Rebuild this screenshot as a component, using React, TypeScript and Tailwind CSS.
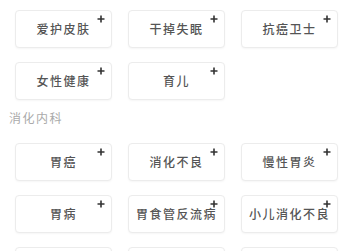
const sections: { title?: string; items: string[] }[] = [
  { items: ["爱护皮肤", "干掉失眠", "抗癌卫士", "女性健康", "育儿"] },
  {
    title: "消化内科",
    items: ["胃癌", "消化不良", "慢性胃炎", "胃病", "胃食管反流病", "小儿消化不良", "肠胃炎", "便秘", "腹泻"],
  },
];

function Tag({ label }: { label: string }) {
  return (
    <div className="relative flex h-[38px] items-center justify-center rounded-[4px] border border-[#ececec] bg-white shadow-[0_1px_2px_rgba(0,0,0,0.04)]">
      <span className="text-[12px] font-medium tracking-[1.5px] text-[#555]">{label}</span>
      <svg className="absolute right-[6px] top-[4px]" width="8" height="8" viewBox="0 0 8 8">
        <path d="M4 0.5v7M0.5 4h7" stroke="#333" strokeWidth="1.6" />
      </svg>
    </div>
  );
}

export default function App() {
  return (
    <div
      className="min-h-screen w-full overflow-hidden bg-white pt-[10px]"
      style={{ fontFamily: '"Noto Sans CJK SC", "Noto Sans", sans-serif' }}
    >
      {sections.map((s, i) => (
        <div key={i}>
          {s.title && (
            <div className="mt-[9px] mb-[16px] pl-[9px] text-[12px] leading-[18px] tracking-[1.5px] text-[#aaa]">
              {s.title}
            </div>
          )}
          <div className="grid grid-cols-[97px_97px_97px] gap-x-[16px] gap-y-[14px] pl-[15px]">
            {s.items.map((it) => (
              <Tag key={it} label={it} />
            ))}
          </div>
        </div>
      ))}
    </div>
  );
}
